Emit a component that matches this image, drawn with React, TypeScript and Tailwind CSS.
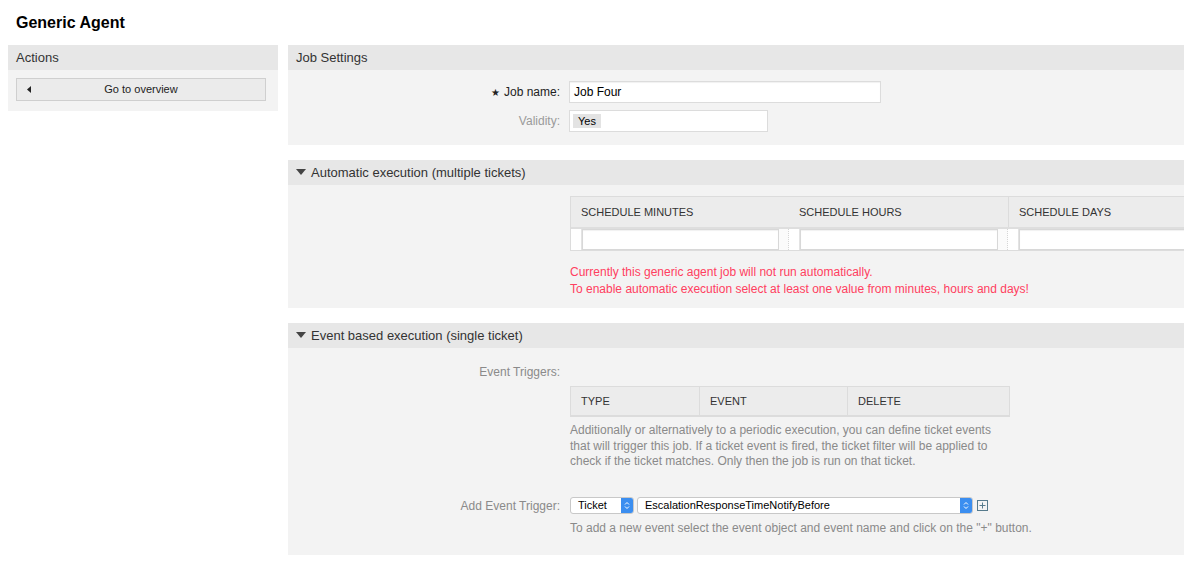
import React from 'react';

const font = { fontFamily: '"Liberation Sans", Arial, sans-serif' };

function DownTriangle() {
  return (
    <svg width="10" height="7" viewBox="0 0 10 7" className="mr-[5px] shrink-0">
      <polygon points="0,0 10,0 5,6" fill="#444" />
    </svg>
  );
}

function SectionHeader({ title, toggle }: { title: string; toggle?: boolean }) {
  return (
    <div className="h-[25px] bg-[#e7e7e7] flex items-center px-2 text-[13px] text-[#333]">
      {toggle && <DownTriangle />}
      {title}
    </div>
  );
}

function SelectBox({ label, width }: { label: string; width: string }) {
  return (
    <div className={`${width} h-[17px] bg-white border border-[#c8c8c8] rounded-[3px] flex items-center overflow-hidden`}>
      <span className="flex-1 pl-[7px] text-[11px] text-black leading-none">{label}</span>
      <span className="w-[12px] h-full bg-[#3b8ef0] flex items-center justify-center">
        <svg width="6" height="9" viewBox="0 0 6 9">
          <polyline points="1,3.5 3,1.5 5,3.5" fill="none" stroke="white" strokeWidth="1" />
          <polyline points="1,5.5 3,7.5 5,5.5" fill="none" stroke="white" strokeWidth="1" />
        </svg>
      </span>
    </div>
  );
}

function ScheduleCell({ last }: { last?: boolean }) {
  return (
    <div className="flex h-full">
      <div className="w-[11px] bg-white border-r border-[#e3e3e3]" />
      <div className="flex-1 bg-white border border-[#d8d8d8] shadow-[inset_0_1px_1px_rgba(0,0,0,0.06)]" />
      {!last && <div className="w-[10px] bg-[#fbfbfb] border-r border-dotted border-[#d6d6d6]" />}
    </div>
  );
}

export default function App() {
  return (
    <div className="w-[1200px] h-[568px] bg-white overflow-hidden text-[#333]" style={font}>
      <div className="h-[45px] flex items-center px-4">
        <h1 className="text-[16px] font-bold text-black">Generic Agent</h1>
      </div>

      <div className="flex items-start">
        {/* Sidebar */}
        <div className="ml-2 w-[270px] shrink-0">
          <SectionHeader title="Actions" />
          <div className="bg-[#f3f3f3] pl-2 pr-3 pt-2 pb-[10px]">
            <button className="relative w-full h-[23px] bg-[#ebebeb] border border-[#cfcfcf] text-[11px] text-[#222] flex items-center justify-center">
              <svg width="4" height="7" viewBox="0 0 4 7" className="absolute left-[10px] top-[7px]">
                <polygon points="4,0 4,7 0,3.5" fill="#222" />
              </svg>
              Go to overview
            </button>
          </div>
        </div>

        {/* Main */}
        <div className="ml-[10px] w-[896px] shrink-0 flex flex-col gap-[15px]">
          {/* Job settings */}
          <div>
            <SectionHeader title="Job Settings" />
            <div className="bg-[#f3f3f3] pt-[11px] pb-[13px] flex flex-col gap-[7px]">
              <div className="flex items-center">
                <label className="w-[272px] text-right text-[12px] text-[#222]">
                  <span className="text-[10px] mr-[4px]">★</span>Job name:
                </label>
                <div className="ml-[9px] w-[312px] h-[22px] bg-white border border-[#dcdcdc] shadow-[inset_0_1px_1px_rgba(0,0,0,0.06)] flex items-center pl-[4px] text-[12px] text-black">
                  Job Four
                </div>
              </div>
              <div className="flex items-center">
                <label className="w-[272px] text-right text-[12px] text-[#9a9a9a]">Validity:</label>
                <div className="ml-[9px] w-[199px] h-[22px] bg-white border border-[#dcdcdc] flex items-center pl-[3px]">
                  <span className="bg-[#e3e3e3] px-[5px] h-[14px] flex items-center text-[11px] text-black">Yes</span>
                </div>
              </div>
            </div>
          </div>

          {/* Automatic execution */}
          <div>
            <SectionHeader title="Automatic execution (multiple tickets)" toggle />
            <div className="bg-[#f3f3f3] pt-[11px] pb-[10px]">
              <div className="ml-[282px] overflow-hidden">
                <div className="w-[640px] border-t border-l border-[#dcdcdc]">
                  <div className="grid grid-cols-[218px_219px_1fr] h-[32px] bg-[#ececec] border-b-2 border-[#dedede] text-[11px] text-[#333]">
                    <div className="flex items-center pl-[10px]">SCHEDULE MINUTES</div>
                    <div className="flex items-center pl-[10px]">SCHEDULE HOURS</div>
                    <div className="flex items-center pl-[10px] border-l border-[#dcdcdc]">SCHEDULE DAYS</div>
                  </div>
                  <div className="grid grid-cols-[218px_219px_1fr] h-[22px] border-b border-[#dcdcdc]">
                    <ScheduleCell />
                    <ScheduleCell />
                    <ScheduleCell last />
                  </div>
                </div>
              </div>
              <div className="ml-[282px] mt-[13px] text-[12px] leading-[17px] text-[#ff4060]">
                <p>Currently this generic agent job will not run automatically.</p>
                <p>To enable automatic execution select at least one value from minutes, hours and days!</p>
              </div>
            </div>
          </div>

          {/* Event based execution */}
          <div>
            <SectionHeader title="Event based execution (single ticket)" toggle />
            <div className="bg-[#f3f3f3] pt-[16px] pb-[18px]">
              <div className="flex">
                <label className="w-[272px] text-right text-[12px] text-[#8a8a8a] leading-[16px]">Event Triggers:</label>
              </div>
              <div className="ml-[282px] mt-[6px] w-[440px] grid grid-cols-[129px_148px_1fr] h-[31px] bg-[#ececec] border border-[#dcdcdc] border-b-2 text-[11px] text-[#333]">
                <div className="flex items-center pl-[10px] border-r border-[#dcdcdc]">TYPE</div>
                <div className="flex items-center pl-[10px] border-r border-[#dcdcdc]">EVENT</div>
                <div className="flex items-center pl-[10px]">DELETE</div>
              </div>
              <p className="ml-[282px] mt-[6px] w-[440px] text-[12px] leading-[15.5px] text-[#8a8a8a]">
                Additionally or alternatively to a periodic execution, you can define ticket events that will trigger this job. If a ticket event is fired, the ticket filter will be applied to check if the ticket matches. Only then the job is run on that ticket.
              </p>
              <div className="flex items-center mt-[27px]">
                <label className="w-[272px] text-right text-[12px] text-[#8a8a8a]">Add Event Trigger:</label>
                <div className="ml-[10px] flex items-center gap-[3px]">
                  <SelectBox label="Ticket" width="w-[64px]" />
                  <SelectBox label="EscalationResponseTimeNotifyBefore" width="w-[336px]" />
                  <svg width="11" height="11" viewBox="0 0 11 11" className="ml-[1px]">
                    <rect x="0.5" y="0.5" width="10" height="10" fill="none" stroke="#567a8c" strokeWidth="1" />
                    <line x1="5.5" y1="2.5" x2="5.5" y2="8.5" stroke="#567a8c" strokeWidth="1" />
                    <line x1="2.5" y1="5.5" x2="8.5" y2="5.5" stroke="#567a8c" strokeWidth="1" />
                  </svg>
                </div>
              </div>
              <p className="ml-[282px] mt-[4px] text-[12px] text-[#8a8a8a]">
                To add a new event select the event object and event name and click on the "+" button.
              </p>
            </div>
          </div>
        </div>
      </div>
    </div>
  );
}
